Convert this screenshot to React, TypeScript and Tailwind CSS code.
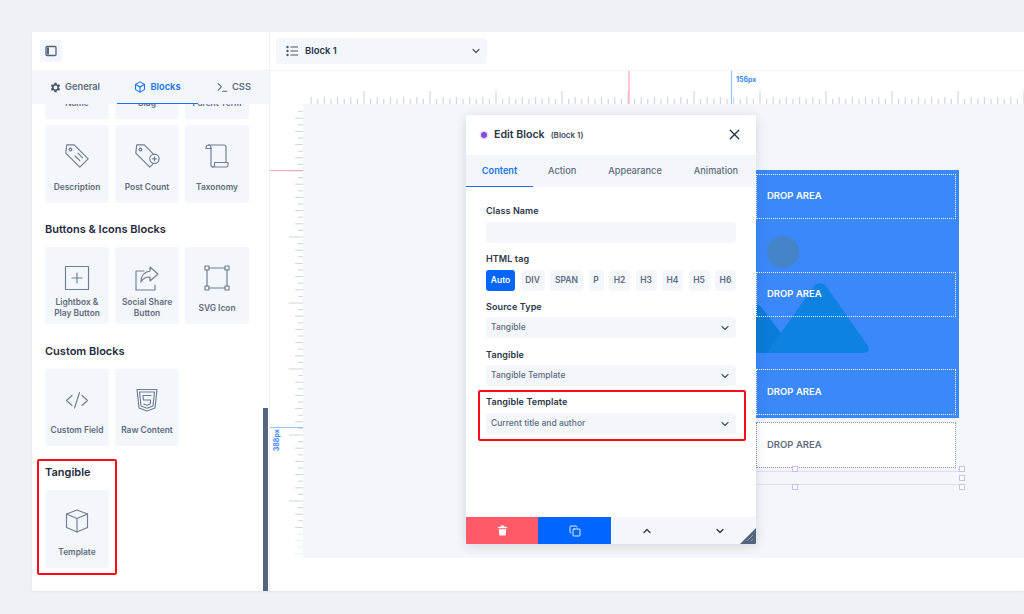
import React from "react";
import { ChevronDown, ChevronUp, X, Copy, Box, Terminal } from "lucide-react";

const S = { fill: "none", stroke: "#707d94", strokeWidth: 1.15, strokeLinecap: "round" as const, strokeLinejoin: "round" as const };

function TagIcon({ plus }: { plus?: boolean }) {
  return (
    <svg width="28" height="28" viewBox="0 0 30 30" {...S} strokeWidth={1.25}>
      <path d="M4 3h8l15 15-9 9L3 12z" />
      <circle cx="8" cy="8" r="1.500" />
      {plus ? (
        <>
          <circle cx="23" cy="18" r="5" fill="#f3f6fa" />
          <path d="M23 16v4M21 18h4" />
        </>
      ) : (
        <path d="M13 15l5 5M16 12l5 5" />
      )}
    </svg>
  );
}

const icons: Record<string, React.ReactNode> = {
  Description: <TagIcon />,
  "Post Count": <TagIcon plus />,
  Taxonomy: (
    <svg width="26" height="26" viewBox="0 0 26 26" {...S}>
      <path d="M2 5c0-2 1-3 2.500-3S7 3 7 5v17c0 1.200.8 2 2 2" />
      <path d="M4.500 2H20c1.200 0 2 .8 2 2v15.500" />
      <path d="M10 24h12.500c1 0 1.500-.8 1.500-1.500v-3H10.500v3c0 1-.5 1.500-1.500 1.500" />
      <path d="M2 5.500h5" />
    </svg>
  ),
  Lightbox: (
    <svg width="26" height="26" viewBox="0 0 26 26" {...S}>
      <rect x="1.500" y="1.500" width="23" height="23" />
      <path d="M13 8v10M8 13h10" />
    </svg>
  ),
  Social: (
    <svg width="26" height="26" viewBox="0 0 26 26" {...S}>
      <path d="M10 6H2v19h19v-5" />
      <path d="M16 2l8 7-8 7v-4c-4 0-7 1-9 5 0-6 3-10 9-11z" />
    </svg>
  ),
  SVG: (
    <svg width="26" height="26" viewBox="0 0 26 26" {...S}>
      <path d="M5 3h16M5 23h16M3 5v16M23 5v16" />
      <rect x="1" y="1" width="4" height="4" />
      <rect x="21" y="1" width="4" height="4" />
      <rect x="1" y="21" width="4" height="4" />
      <rect x="21" y="21" width="4" height="4" />
    </svg>
  ),
  Custom: (
    <svg width="26" height="26" viewBox="0 0 26 26" {...S}>
      <path d="M8 8.500l-5.500 5 5.500 5M18 8.500l5.500 5-5.500 5M15.500 5.500l-5 15.500" />
    </svg>
  ),
  Raw: (
    <svg width="26" height="26" viewBox="0 0 26 26" {...S}>
      <path d="M3 2.500h20l-2 18.500-8 3-8-3z" />
      <path d="M5.500 5h15l-1.500 14-6 2.200L7 19z" />
      <path d="M17 8.500H9l.4 4.500h7.200l-.4 4-3.200 1.200-3.200-1.200" />
    </svg>
  ),
  Template: (
    <svg width="26" height="26" viewBox="0 0 26 26" {...S}>
      <path d="M13 2l10.500 4v13.500L13 24 2.500 19.500V6z" />
      <path d="M2.500 6L13 10.500 23.500 6M13 10.500V24" />
    </svg>
  ),
};

function Card({ label, icon, h = "h-[78px]" }: { label: React.ReactNode; icon?: string; h?: string }) {
  return (
    <div className={`${h} rounded-[3px] bg-[#f3f6fa] flex flex-col items-center pb-[5px] text-center`}>
      {icon && <div className="h-[28px] mt-[17px] flex items-center justify-center">{icons[icon]}</div>}
      <div className="mt-auto h-[22px] flex items-center text-[8.400px] leading-[11px] font-semibold text-[#5f6b7e]">
        <div>{label}</div>
      </div>
    </div>
  );
}

function Heading({ children, className = "" }: { children: React.ReactNode; className?: string }) {
  return <div className={`text-[11px] leading-[14px] font-semibold text-[#1f2a3d] ${className}`}>{children}</div>;
}

function Select({ value }: { value: string }) {
  return (
    <div className="h-[21px] rounded-[3px] bg-[#f3f6fa] flex items-center justify-between pl-[5px] pr-[5px]">
      <span className="text-[8.500px] font-medium text-[#5f6b7e]">{value}</span>
      <ChevronDown size={12} strokeWidth={2.400} color="#4a566a" />
    </div>
  );
}

function Label({ children }: { children: React.ReactNode }) {
  return <div className="text-[9px] leading-[12px] font-semibold tracking-[0.1px] text-[#2a3547]">{children}</div>;
}

function Ruler() {
  const ticks = Array.from({ length: 110 }, (_, i) => i);
  return (
    <svg width="754" height="33" className="block">
      {ticks.map((i) => {
        const x = 41.200 + i * 6.6;
        const major = (i - 8) % 10 === 0;
        const h = major ? 13 : i % 2 === 0 ? 7 : 5;
        return <line key={i} x1={x} x2={x} y1={33 - h} y2={33} stroke="#d2d7df" strokeWidth={1.200} />;
      })}
      <line x1="359" x2="359" y1="0" y2="33" stroke="#ffb3bb" strokeWidth="1.500" />
      <line x1="461.500" x2="461.500" y1="0" y2="33" stroke="#9cc3fb" strokeWidth="1.200" />
    </svg>
  );
}

function VRuler() {
  const ticks = Array.from({ length: 69 }, (_, i) => i).slice(1);
  return (
    <svg width="33" height="454" className="block">
      {ticks.map((i) => {
        const y = 1 + i * 6.6;
        const w = i % 10 === 0 ? 14 : i % 2 === 0 ? 8 : 5;
        return <line key={i} x1={33 - w} x2={33} y1={y} y2={y} stroke={i > 64 ? "#eceff3" : "#d2d7df"} strokeWidth={1.100} />;
      })}
      <line x1="0" x2="33" y1="66.500" y2="66.500" stroke="#ffa8b1" />
      <line x1="0" x2="33" y1="323.500" y2="323.500" stroke="#9cc3fb" />
    </svg>
  );
}

function Drop({ white, h = "h-[45px]" }: { white?: boolean; h?: string }) {
  return (
    <div
      className={`${h} border border-dotted flex items-center pl-[10px] text-[9.500px] font-semibold ${
        white ? "border-[#8d929c] text-[#5f6b7e] bg-white" : "border-white text-white"
      }`}
    >
      DROP AREA
    </div>
  );
}

const tags = [
  ["Auto", "w-[29px]"],
  ["DIV", "w-[24px]"],
  ["SPAN", "w-[33px]"],
  ["P", "w-[15px]"],
  ["H2", "w-[21px]"],
  ["H3", "w-[21px]"],
  ["H4", "w-[21px]"],
  ["H5", "w-[21px]"],
  ["H6", "w-[21px]"],
];

const handle = "absolute w-[6px] h-[6px] border border-[#c9bdf0] bg-white";

export default function App() {
  return (
    <div className="h-[614px] w-[1024px] overflow-hidden bg-[#eef2f6] pt-[32px] pl-[32px] font-['Inter',sans-serif]">
      <div className="h-[559px] bg-white flex shadow-[0_1px_3px_rgba(0,0,0,0.06)]">
        {/* Sidebar */}
        <aside className="relative w-[237px] shrink-0 flex flex-col overflow-hidden">
          <div className="h-[38px] shrink-0 flex items-center pl-[8px]">
            <div className="w-[22px] h-[22px] rounded-[3px] bg-[#f3f6fa] flex items-center justify-center">
              <svg width="12" height="12" viewBox="0 0 12 12" fill="none" stroke="#566377" strokeWidth="1.300">
                <rect x="1" y="1.500" width="10" height="9" rx="1" />
                <rect x="2" y="2.500" width="2" height="7" fill="#566377" stroke="none" />
              </svg>
            </div>
          </div>
          <div className="relative z-10 h-[34px] shrink-0 bg-[#f3f6fa] flex items-center text-[9.300px] font-semibold text-[#5f6b7e]">
            <div className="w-[85px] flex items-center gap-[3px] pl-[17px]">
              <svg width="13" height="13" viewBox="0 0 24 24" fill="#4a566a">
                <path d="M19.400 13a7.600 7.600 0 0 0 0-2l2.100-1.600-2-3.500-2.500 1a7.500 7.500 0 0 0-1.700-1L15 3.300h-4l-.4 2.600a7.500 7.500 0 0 0-1.700 1l-2.500-1-2 3.500L6.500 11a7.600 7.600 0 0 0 0 2l-2.100 1.600 2 3.500 2.500-1a7.500 7.500 0 0 0 1.700 1l.4 2.600h4l.4-2.600a7.500 7.500 0 0 0 1.700-1l2.500 1 2-3.500zM13 15.500a3.500 3.500 0 1 1 0-7 3.500 3.500 0 0 1 0 7z" transform="translate(-1 0)" />
              </svg>
              General
            </div>
            <div className="relative h-full w-[81px] flex items-center justify-center gap-[4px] text-[#1a73f0]">
              <Box size={12} strokeWidth={2.200} />
              Blocks
              <div className="absolute left-0 right-0 bottom-0 h-[1px] bg-[#1a73f0]" />
            </div>
            <div className="flex items-center gap-[3px] pl-[18px]">
              <Terminal size={13} strokeWidth={2} />
              CSS
            </div>
          </div>

          <div className="flex-1 px-[13px] -mt-[15px]">
            <div className="grid grid-cols-[64px_64px_64px] gap-[6px]">
              <Card label="Name" h="h-[30px]" />
              <Card label="Slug" h="h-[30px]" />
              <Card label="Parent Term" h="h-[30px]" />
              <Card label="Description" icon="Description" />
              <Card label="Post Count" icon="Post Count" />
              <Card label="Taxonomy" icon="Taxonomy" />
            </div>
            <Heading className="mt-[19px] mb-[11px]">Buttons &amp; Icons Blocks</Heading>
            <div className="grid grid-cols-[64px_64px_64px] gap-[6px]">
              <Card label={<>Lightbox &amp;<br />Play Button</>} icon="Lightbox" h="h-[77px]" />
              <Card label={<>Social Share<br />Button</>} icon="Social" h="h-[77px]" />
              <Card label="SVG Icon" icon="SVG" h="h-[77px]" />
            </div>
            <Heading className="mt-[20px] mb-[11px]">Custom Blocks</Heading>
            <div className="grid grid-cols-[64px_64px_64px] gap-[6px]">
              <Card label="Custom Field" icon="Custom" h="h-[77px]" />
              <Card label="Raw Content" icon="Raw" h="h-[77px]" />
            </div>
            <Heading className="mt-[19px] mb-[11px]">Tangible</Heading>
            <div className="grid grid-cols-[64px_64px_64px] gap-[6px]">
              <Card label="Template" icon="Template" />
            </div>
          </div>
          {/* highlight + scroll thumb */}
          <div className="absolute left-[5px] top-[427px] w-[80px] h-[116px] border-2 border-[#ff0a16] rounded-[2px]" />
          <div className="absolute right-[1px] top-[376px] bottom-0 w-[5px] bg-[#54657f]" />
        </aside>

        {/* Main */}
        <main className="flex-1 min-w-0 flex flex-col border-l border-[#eef2f6]">
          <div className="h-[39px] shrink-0 border-b border-[#eff2f6] flex items-center pl-[6px]">
            <div className="w-[211px] h-[26px] rounded-[3px] bg-[#f3f6fa] flex items-center pl-[10px] pr-[5px]">
              <svg width="12" height="12" viewBox="0 0 12 12" fill="#4a566a">
                <circle cx="1.500" cy="2" r="1.200" />
                <circle cx="1.500" cy="6" r="1.200" />
                <circle cx="1.500" cy="10" r="1.200" />
                <rect x="4.500" y="1.500" width="7.500" height="1" />
                <rect x="4.500" y="5.500" width="7.500" height="1" />
                <rect x="4.500" y="9.500" width="7.500" height="1" />
              </svg>
              <span className="ml-[7px] flex-1 text-[9.500px] font-semibold text-[#2a3547]">Block 1</span>
              <ChevronDown size={12} strokeWidth={2.400} color="#4a566a" />
            </div>
          </div>

          <div className="relative flex-1">
            <div className="flex flex-col">
              <div className="relative h-[33px]">
                <Ruler />
                <span className="absolute left-[466px] top-[4px] text-[7px] font-bold text-[#3b88fb]">156px</span>
              </div>
              <div className="flex">
                <div className="relative w-[33px] shrink-0">
                  <VRuler />
                  <span className="absolute left-[-5px] top-[331px] -rotate-90 origin-center w-[24px] text-center text-[7px] font-bold text-[#3b88fb]">388px</span>
                </div>
                <div className="relative flex-1 h-[454px] bg-[#f3f6fa]">
                  {/* Canvas content */}
                  <div className="absolute left-[453px] top-[66px] w-[203px]">
                    <div className="relative h-[248px] bg-[#3b88fb] pt-[4px] pr-[3px] flex flex-col overflow-hidden">
                      <svg className="absolute left-0 top-0" width="203" height="248" viewBox="0 0 203 248">
                        <circle cx="27" cy="82" r="16" fill="#4583c9" />
                        <path d="M-40 183L-6 137q5-6 11 0L40 183z" fill="#0a7bd8" />
                        <path d="M11 183L58 116q6-6 12 0L112 176q3 7-5 7z" fill="#0d82e2" />
                      </svg>
                      <div className="relative"><Drop /></div>
                      <div className="relative mt-[53px]"><Drop /></div>
                      <div className="relative mt-[52px]"><Drop h="h-[46px]" /></div>
                    </div>
                    <div className="pr-[3px] mt-[4px]"><Drop white h="h-[46px]" /></div>
                    <div className="relative h-[14px] mt-[3px] border-y border-[#e2dcf3]">
                      <span className={`${handle} left-[36px] -top-[6px]`} />
                      <span className={`${handle} left-[36px] top-[12px]`} />
                      <span className={`${handle} left-[203px] -top-[6px]`} />
                      <span className={`${handle} left-[203px] top-[3px]`} />
                      <span className={`${handle} left-[203px] top-[12px]`} />
                    </div>
                  </div>

                  {/* Modal */}
                  <div className="absolute left-[163px] top-[11px] w-[290px] h-[429px] bg-white rounded-[2px] shadow-[0_2px_12px_rgba(40,60,90,0.16)] flex flex-col">
                    <div className="h-[40px] shrink-0 flex items-center pl-[15px] pr-[13px] pb-[1px]">
                      <span className="w-[6px] h-[6px] rounded-full bg-[#7c4dd6] shadow-[0_0_0_1.500px_rgba(124,77,214,0.2)]" />
                      <span className="ml-[7px] text-[10.600px] font-semibold text-[#2a3547]">Edit Block</span>
                      <span className="ml-[6px] text-[8px] font-semibold text-[#3f4a5c]">(Block 1)</span>
                      <X size={17} strokeWidth={1.700} color="#1f2a3d" className="ml-auto" />
                    </div>
                    <div className="h-[32px] shrink-0 bg-[#f3f6fa] flex items-center text-[9.200px] font-medium text-[#5f6b7e]">
                      <div className="relative h-full w-[67px] flex items-center justify-center font-semibold text-[#1a73f0]">
                        Content
                        <div className="absolute left-0 right-0 bottom-0 h-[1px] bg-[#1a73f0]" />
                      </div>
                      <div className="ml-[15px]">Action</div>
                      <div className="ml-[32px]">Appearance</div>
                      <div className="ml-[32px]">Animation</div>
                    </div>

                    <div className="flex-1 px-[20px] pt-[18px]">
                      <Label>Class Name</Label>
                      <div className="h-[21px] mt-[5px] rounded-[3px] bg-[#f3f6fa]" />
                      <div className="mt-[10px]"><Label>HTML tag</Label></div>
                      <div className="mt-[5px] flex justify-between">
                        {tags.map(([t, w], i) => (
                          <div
                            key={t}
                            className={`${w} h-[21px] rounded-[3px] flex items-center justify-center text-[8.500px] font-semibold ${
                              i === 0 ? "bg-[#0066ff] text-white" : "bg-[#f3f6fa] text-[#5f6b7e]"
                            }`}
                          >
                            {t}
                          </div>
                        ))}
                      </div>
                      <div className="mt-[10px] mb-[4px]"><Label>Source Type</Label></div>
                      <Select value="Tangible" />
                      <div className="mt-[11px] mb-[4px]"><Label>Tangible</Label></div>
                      <Select value="Tangible Template" />
                      <div className="mt-[10px] mb-[5px]"><Label>Tangible Template</Label></div>
                      <Select value="Current title and author" />
                    </div>

                    <div className="h-[27px] shrink-0 flex bg-[#f3f6fa]">
                      <div className="w-[72px] bg-[#ff5a6a] flex items-center justify-center">
                        <svg width="11" height="11" viewBox="0 0 12 12" fill="#fff">
                          <rect x="4" y="0.500" width="4" height="1.500" />
                          <rect x="1" y="2" width="10" height="1.500" />
                          <path d="M2 4.500h8l-.6 7H2.600z" />
                        </svg>
                      </div>
                      <div className="w-[73px] bg-[#0066ff] flex items-center justify-center">
                        <Copy size={12} strokeWidth={1.800} color="#fff" />
                      </div>
                      <div className="w-[72px] flex items-center justify-center">
                        <ChevronUp size={12} strokeWidth={2.500} color="#2a3547" />
                      </div>
                      <div className="w-[73px] flex items-center justify-center">
                        <ChevronDown size={12} strokeWidth={2.500} color="#2a3547" />
                      </div>
                    </div>
                    <svg className="absolute right-0 bottom-0" width="16" height="16" viewBox="0 0 16 16">
                      <path d="M16 0v15a1 1 0 0 1-1 1H0z" fill="#55647e" />
                      <path d="M7 13l6-6M11 13l2-2" stroke="#9aa6b8" strokeWidth="0.800" />
                    </svg>
                  </div>

                  {/* Highlight */}
                  <div className="absolute left-[175px] top-[286px] w-[268px] h-[51px] border-2 border-[#ff0a16] rounded-[2px]" />
                </div>
              </div>
            </div>
          </div>
        </main>
      </div>
    </div>
  );
}
